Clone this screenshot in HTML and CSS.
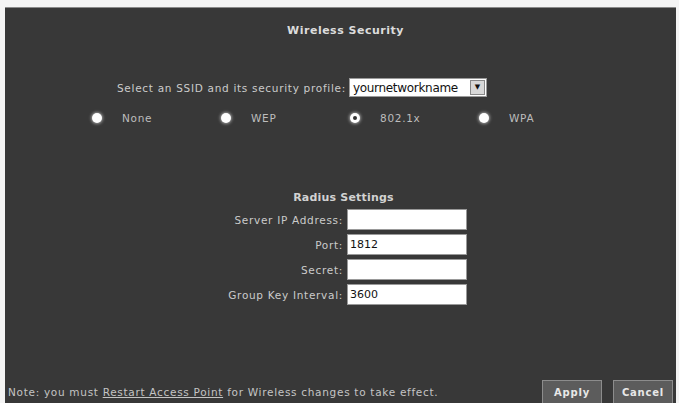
FILE: index.html
```html
<!DOCTYPE html>
<html lang="en">

<head>
    <meta charset="UTF-8">
    <meta name="viewport" content="width=device-width, initial-scale=1.0">
    <title>Wireless Security</title>
    <link rel="stylesheet" href="styles.css">
</head>

<body>
    <!-- main settings panel -->
    <div class="panel">
        <h1 class="title">Wireless Security</h1>

        <div class="ssid-row">
            <span>Select an SSID and its security profile:</span>
            <div class="select">
                <span class="select-text">yournetworkname</span>
                <span class="select-arrow">&#9660;</span>
            </div>
        </div>

        <!-- security mode choices -->
        <div class="modes">
            <label class="mode"><span class="radio"></span>None</label>
            <label class="mode"><span class="radio"></span>WEP</label>
            <label class="mode"><span class="radio checked"></span>802.1x</label>
            <label class="mode"><span class="radio"></span>WPA</label>
        </div>

        <h2 class="subtitle">Radius Settings</h2>
        <div class="fields">
            <div class="field"><span class="field-label">Server IP Address:</span><span class="input"></span></div>
            <div class="field"><span class="field-label">Port:</span><span class="input">1812</span></div>
            <div class="field"><span class="field-label">Secret:</span><span class="input"></span></div>
            <div class="field"><span class="field-label">Group Key Interval:</span><span class="input">3600</span></div>
        </div>

        <div class="footer">
            <p class="note">Note: you must <a href="javascript:;">Restart Access Point</a> for Wireless changes to take effect.</p>
            <div class="buttons">
                <a class="btn" href="javascript:;">Apply</a>
                <a class="btn" href="javascript:;">Cancel</a>
            </div>
        </div>
    </div>
</body>

</html>
```

FILE: styles.css
```css
* {
    margin: 0;
    padding: 0;
    box-sizing: border-box;
}

body {
    background-color: #f4f4f4;
    font-family: "DejaVu Sans", Verdana, sans-serif;
    font-size: 10.5px;
    letter-spacing: 0.7px;
    color: #cbcbcb;
}

.panel {
    margin: 7px 3px 0 5px;
    height: 396px;
    background-color: #383838;
    border-top: 1px solid #8a8a8a;
    display: flex;
    flex-direction: column;
    padding-top: 16px;
}

.title {
    font-size: 11px;
    font-weight: bold;
    letter-spacing: 0.5px;
    color: #dcdcdc;
    text-align: center;
    padding-left: 10px;
}

/* SSID select line */
.ssid-row {
    margin-top: 41px;
    display: flex;
    align-items: center;
    padding-left: 112px;
    gap: 3px;
}

.select {
    width: 138px;
    height: 19px;
    background-color: #fff;
    border: 1px solid #9a9a9a;
    display: flex;
    align-items: center;
    padding: 1px;
    letter-spacing: 0;
}

.select-text {
    flex: 1;
    font-size: 12px;
    color: #111;
    padding-left: 2px;
    letter-spacing: -0.3px;
}

.select-arrow {
    width: 15px;
    height: 15px;
    background-color: #d8d8d8;
    border: 1px solid #888;
    color: #111;
    font-size: 7px;
    text-align: center;
    line-height: 13px;
}

.modes {
    display: flex;
    margin-top: 15px;
    padding-left: 87px;
}

.mode {
    width: 129px;
    display: flex;
    align-items: center;
    gap: 20px;
    color: #bdbdbd;
}

.radio {
    width: 10px;
    height: 10px;
    border-radius: 50%;
    background-color: #fff;
    box-shadow: 0 0 3px 1px rgba(255, 255, 255, 0.5);
    display: flex;
    align-items: center;
    justify-content: center;
}

.radio.checked::after {
    content: "";
    width: 4px;
    height: 4px;
    border-radius: 50%;
    background-color: #333;
}

/* radius server form */
.subtitle {
    margin-top: 67px;
    font-size: 11px;
    font-weight: bold;
    letter-spacing: 0.2px;
    color: #d2d2d2;
    text-align: center;
    padding-left: 6px;
}

.fields {
    margin-top: 5px;
    display: flex;
    flex-direction: column;
    gap: 4px;
}

.field {
    display: flex;
    align-items: center;
}

.field-label {
    width: 342px;
    text-align: right;
    padding-right: 4px;
}

.input {
    width: 120px;
    height: 21px;
    background-color: #fff;
    border: 1px solid #999;
    color: #111;
    font-size: 11px;
    letter-spacing: 0;
    line-height: 19px;
    padding-left: 2px;
}

.footer {
    margin-top: auto;
    display: flex;
    align-items: flex-end;
    justify-content: space-between;
    padding: 0 3px;
}

.note {
    padding-bottom: 5px;
    color: #c4c4c4;
}

.note a {
    color: #c4c4c4;
}

.buttons {
    display: flex;
    gap: 11px;
}

.btn {
    width: 60px;
    height: 23px;
    background-color: #5c5c5c;
    border: 1px solid #8c8c8c;
    border-bottom: none;
    color: #e8e8e8;
    font-weight: bold;
    font-size: 10px;
    letter-spacing: 0.8px;
    text-decoration: none;
    text-align: center;
    line-height: 23px;
}
```
